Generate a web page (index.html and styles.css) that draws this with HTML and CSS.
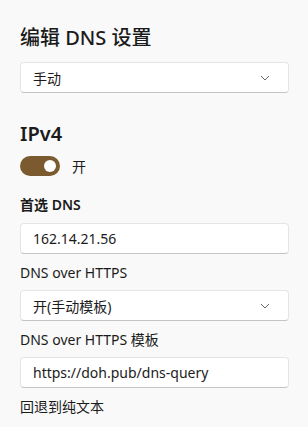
FILE: index.html
```html
<!DOCTYPE html>
<html lang="zh-CN">
<head>
    <meta charset="UTF-8">
    <meta name="viewport" content="width=device-width, initial-scale=1.0">
    <title>编辑 DNS 设置</title>
    <link rel="stylesheet" href="styles.css">
</head>
<body>
    <div class="panel">
        <h1 class="title">编辑 DNS 设置</h1>

        <div class="select">
            <span>手动</span>
            <svg class="chevron" width="10" height="6" viewBox="0 0 10 6"><path d="M1 1l4 4 4-4" fill="none" stroke="#666" stroke-width="1"/></svg>
        </div>

        <h2 class="section">IPv4</h2>

        <div class="toggle-row">
            <span class="toggle"><span class="knob"></span></span>
            <span>开</span>
        </div>

        <div class="label strong">首选 DNS</div>
        <div class="field">162.14.21.56</div>

        <div class="label">DNS over HTTPS</div>
        <div class="select">
            <span>开(手动模板)</span>
            <svg class="chevron" width="10" height="6" viewBox="0 0 10 6"><path d="M1 1l4 4 4-4" fill="none" stroke="#666" stroke-width="1"/></svg>
        </div>

        <div class="label">DNS over HTTPS 模板</div>
        <div class="field">https://doh.pub/dns-query</div>

        <div class="label">回退到纯文本</div>
    </div>
</body>
</html>
```

FILE: styles.css
```css
body {
    margin: 0;
    background-color: #f9f9f9;
    font-family: "Noto Sans", "Noto Sans CJK SC", sans-serif;
    color: #1b1b1b;
    font-size: 14px;
}
.panel {
    padding: 24px 19px 0 20px;
}
.title {
    font-size: 20px;
    font-weight: 500;
    line-height: 28px;
    margin: 0 0 10px;
}
.select, .field {
    box-sizing: border-box;
    height: 31px;
    display: flex;
    align-items: center;
    justify-content: space-between;
    padding: 0 16px 0 12px;
    background: #fff;
    border: 1px solid #e5e5e5;
    border-bottom-color: #c4c4c4;
    border-radius: 4px;
    font-size: 14px;
}
.chevron {
    margin-right: 2px;
}
.section {
    font-size: 20px;
    font-weight: 600;
    line-height: 28px;
    margin: 27px 0 8px;
}
.toggle-row {
    display: flex;
    align-items: center;
    gap: 12px;
    height: 20px;
}
.toggle {
    width: 40px;
    height: 20px;
    border-radius: 10px;
    background: #7a5a2e;
    position: relative;
}
.knob {
    position: absolute;
    right: 4px;
    top: 4px;
    width: 12px;
    height: 12px;
    border-radius: 50%;
    background: #fff;
}
.label {
    line-height: 20px;
    margin: 19px 0 8px;
}
.label.strong {
    font-weight: 600;
}
.field + .label, .select + .label {
    margin-top: 9px;
    margin-bottom: 7px;
}
```
